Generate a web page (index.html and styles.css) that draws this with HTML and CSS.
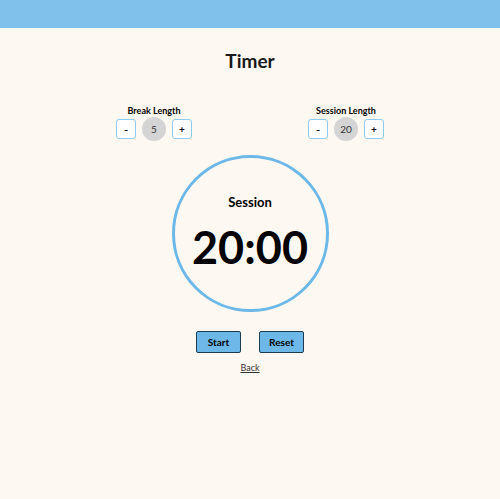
FILE: index.html
```html
<!DOCTYPE html>
<html>
<head>
<meta charset="utf-8">
<link rel="stylesheet" href="styles.css">
</head>
<body>
<header class="topbar"></header>
<main class="app">
  <h1 class="title">Timer</h1>
  <div class="lengths">
    <div class="length">
      <div class="length-label">Break Length</div>
      <div class="controls">
        <button class="step">-</button>
        <span class="value">5</span>
        <button class="step">+</button>
      </div>
    </div>
    <div class="length">
      <div class="length-label">Session Length</div>
      <div class="controls">
        <button class="step">-</button>
        <span class="value">20</span>
        <button class="step">+</button>
      </div>
    </div>
  </div>
  <div class="clock">
    <div class="clock-label">Session</div>
    <div class="clock-time">20:00</div>
  </div>
  <div class="actions">
    <button class="action">Start</button>
    <button class="action">Reset</button>
  </div>
  <a class="back" href="#">Back</a>
</main>
</body>
</html>
```
FILE: styles.css
```css
* { box-sizing: border-box; }
html, body { margin: 0; padding: 0; }
body {
  background: #fef8f2;
  font-family: Lato, "Liberation Sans", sans-serif;
  color: #000;
  width: 500px;
  height: 499px;
}
.topbar {
  height: 28px;
  background: #7fc1eb;
}
.app {
  display: flex;
  flex-direction: column;
  align-items: center;
}
.title {
  margin: 21px 0 0;
  font-size: 19px;
  font-weight: 700;
  line-height: 23px;
  color: #1a1a1a;
}
.lengths {
  display: flex;
  justify-content: center;
  gap: 116px;
  margin-top: 33px;
}
.length {
  display: flex;
  flex-direction: column;
  align-items: center;
  width: 76px;
}
.length-label {
  font-size: 9px;
  font-weight: 700;
  line-height: 11px;
}
.controls {
  display: flex;
  align-items: center;
  gap: 6px;
  margin-top: 1px;
}
.step {
  width: 20px;
  height: 20px;
  padding: 0;
  border: 1px solid #8ecbef;
  border-radius: 3px;
  background: #fff;
  font-family: Lato, "Liberation Sans", sans-serif;
  font-size: 10px;
  font-weight: 700;
  color: #000;
  line-height: 18px;
}
.value {
  width: 24px;
  height: 24px;
  border-radius: 50%;
  background: #d4d4d4;
  display: flex;
  align-items: center;
  justify-content: center;
  font-size: 10px;
  color: #333;
}
.clock {
  margin-top: 14px;
  width: 157px;
  height: 157px;
  border: 3px solid #6cb9e9;
  border-radius: 50%;
  display: flex;
  flex-direction: column;
  align-items: center;
}
.clock-label {
  margin-top: 36px;
  font-size: 13px;
  font-weight: 700;
  line-height: 16px;
}
.clock-time {
  margin-top: 12px;
  font-size: 45px;
  font-weight: 700;
  line-height: 50px;
}
.actions {
  display: flex;
  gap: 18px;
  margin-top: 19px;
}
.action {
  width: 45px;
  height: 22px;
  padding: 0;
  background: #6db8e9;
  border: 1px solid #1d3b4f;
  border-radius: 2px;
  font-family: Lato, "Liberation Sans", sans-serif;
  font-size: 10px;
  font-weight: 700;
  color: #000;
}
.back {
  margin-top: 9px;
  font-size: 9px;
  line-height: 11px;
  color: #333;
  text-decoration: underline;
}
```
